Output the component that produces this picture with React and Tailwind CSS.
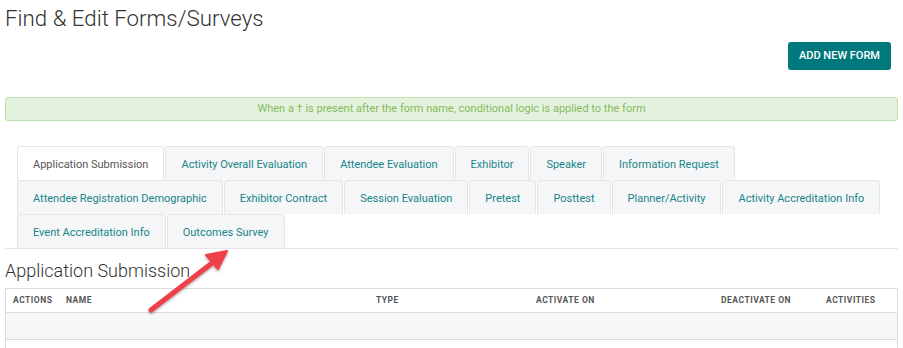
import React from "react";

const row1 = ["Application Submission", "Activity Overall Evaluation", "Attendee Evaluation", "Exhibitor", "Speaker", "Information Request"];
const row2 = ["Attendee Registration Demographic", "Exhibitor Contract", "Session Evaluation", "Pretest", "Posttest", "Planner/Activity", "Activity Accreditation Info"];
const row3 = ["Event Accreditation Info", "Outcomes Survey"];

function Tab({ label, active }) {
  return (
    <div
      className={
        "h-[34px] mr-[1px] px-[15px] pt-[3px] flex items-center text-[11px] whitespace-nowrap rounded-t-[3px] border border-b-0 " +
        (active ? "bg-white text-[#555] border-[#e3e5e8]" : "bg-[#f5f6f7] text-[#17858a] border-[#e3e5e8]")
      }
    >
      {label}
    </div>
  );
}

export default function App() {
  return (
    <div className="relative w-[903px] h-[348px] overflow-hidden bg-white font-['Roboto',sans-serif] text-[#333]">
      <div className="h-[42px] px-[5px] pt-[4px]">
        <h1 className="text-[22.3px] leading-[28px] font-light text-[#333]">Find &amp; Edit Forms/Surveys</h1>
      </div>
      <div className="flex justify-end pr-[12px]">
        <button className="h-[28px] px-[11px] bg-[#00797c] text-white text-[11px] font-medium rounded-[3px]">ADD NEW FORM</button>
      </div>
      <div className="mx-[5px] mt-[27px] h-[24px] pt-[1px] bg-[#e4f2dd] border border-[#bcdfad] rounded-[3px] flex items-center justify-center text-[11px] text-[#86ba60]">
        When a † is present after the form name, conditional logic is applied to the form
      </div>
      <div className="mx-[5px] mt-[25px] pl-[12px] border-b border-[#e3e5e8]">
        <div className="flex">
          {row1.map((t, i) => (
            <Tab key={t} label={t} active={i === 0} />
          ))}
        </div>
        <div className="flex">
          {row2.map((t) => (
            <Tab key={t} label={t} />
          ))}
        </div>
        <div className="flex">
          {row3.map((t) => (
            <Tab key={t} label={t} />
          ))}
        </div>
      </div>
      <div className="h-[39px] px-[5px] pt-[10px]">
        <h2 className="text-[18px] leading-[24px] font-light text-[#333]">Application Submission</h2>
      </div>
      <div className="mx-[5px] border border-[#dcdcdc]">
        <div className="grid grid-cols-[53px_310px_160px_185px_105px_1fr] h-[23px] items-center text-[8.5px] font-bold tracking-[0.5px] text-[#555]">
          <div className="pl-[7px]">ACTIONS</div>
          <div className="pl-[7px]">NAME</div>
          <div className="pl-[7px]">TYPE</div>
          <div className="pl-[7px]">ACTIVATE ON</div>
          <div className="pl-[7px]">DEACTIVATE ON</div>
          <div className="pl-[7px]">ACTIVITIES</div>
        </div>
        <div className="h-[27px] bg-[#f7f7f7] border-t border-[#dcdcdc]" />
        <div className="h-[27px] bg-white border-t border-[#dcdcdc]" />
      </div>
      <svg className="absolute left-0 top-0 pointer-events-none" width="903" height="348" viewBox="0 0 903 348">
        <defs>
          <filter id="sh" x="-20%" y="-20%" width="140%" height="140%">
            <feDropShadow dx="0" dy="1.5" stdDeviation="1.2" floodColor="#000" floodOpacity="0.35" />
          </filter>
        </defs>
        <g filter="url(#sh)">
          <line x1="151" y1="310" x2="216" y2="260" stroke="#ef4048" strokeWidth="5" strokeLinecap="round" />
          <polygon points="227,251 206,255 218,269" fill="#ef4048" stroke="#ef4048" strokeWidth="2" strokeLinejoin="round" />
        </g>
      </svg>
    </div>
  );
}
